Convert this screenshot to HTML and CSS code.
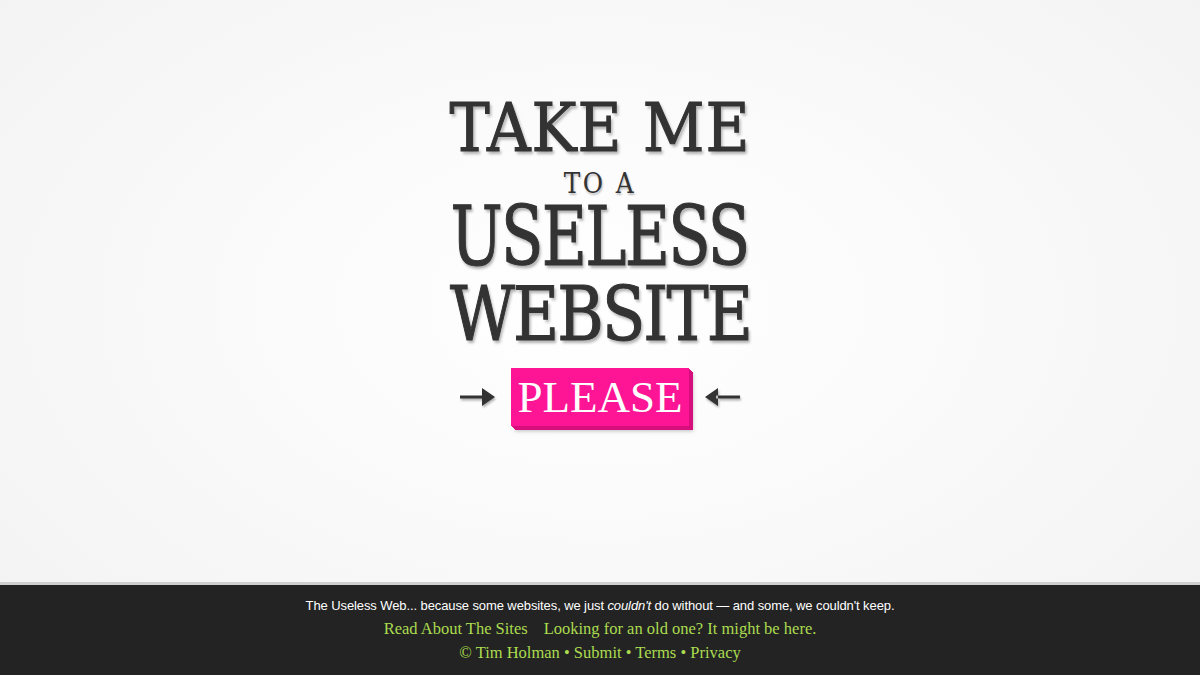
FILE: index.html
```html
<!DOCTYPE html>
<html>
<head>
<meta charset="utf-8">
<link rel="stylesheet" href="styles.css">
</head>
<body>
<main class="stage">
  <div class="headline">
    <div class="line l1"><span>TAKE ME</span></div>
    <div class="line l2"><span>TO A</span></div>
    <div class="line l3"><span>USELESS</span></div>
    <div class="line l4"><span>WEBSITE</span></div>
    <div class="please-row">
      <svg class="arrow" width="38" height="24" viewBox="0 0 38 24"><path d="M1 10.5h24v3H1z M23 3 L36 12 L23 21 Z" fill="#333"/></svg>
      <a class="please">PLEASE</a>
      <svg class="arrow" width="38" height="24" viewBox="0 0 38 24"><path d="M13 10.5h24v3H13z M15 3 L2 12 L15 21 Z" fill="#333"/></svg>
    </div>
  </div>
</main>
<footer class="footer">
  <p class="tag">The Useless Web... because some websites, we just <em>couldn't</em> do without — and some, we couldn't keep.</p>
  <p class="links"><a>Read About The Sites</a><a>Looking for an old one? It might be here.</a></p>
  <p class="links">© Tim Holman • Submit • Terms • Privacy</p>
</footer>
</body>
</html>
```
FILE: styles.css
```css
html, body { margin: 0; padding: 0; }
body {
  width: 1200px; height: 675px; overflow: hidden;
  display: flex; flex-direction: column;
  background: radial-gradient(ellipse at 50% 45%, #ffffff 0%, #fbfbfb 35%, #f2f2f2 100%);
  font-family: "DejaVu Serif", serif;
}
.stage {
  flex: 1;
  display: flex; justify-content: center;
}
.headline {
  padding-top: 90px;
  display: flex; flex-direction: column; align-items: center;
  color: #333;
  text-shadow: 2px 3px 3px rgba(0,0,0,0.3);
  font-stretch: condensed;
  -webkit-text-stroke: 1px #333;
}
.line { white-space: nowrap; }
.line span { display: inline-block; }
.l1 { font-size: 67px; line-height: 77px; letter-spacing: 1px; }
.l2 { font-size: 27.5px; line-height: 32px; letter-spacing: 2.5px; -webkit-text-stroke: 0; text-shadow: 1px 2px 2px rgba(0,0,0,0.25); }
.l3 { font-size: 82px; line-height: 76px; letter-spacing: -2px; }
.l3 span { transform: scaleX(0.84); }
.l4 { font-size: 74px; line-height: 78px; letter-spacing: -2px; }
.l4 span { transform: scaleX(0.95); }
.please-row {
  margin-top: 15px;
  display: flex; align-items: center; gap: 14px;
  -webkit-text-stroke: 0;
}
.arrow { filter: drop-shadow(1px 2px 1px rgba(0,0,0,0.3)); }
.please {
  display: block;
  background: #fd1595;
  color: #fff;
  font-family: "Liberation Serif", serif;
  font-stretch: normal;
  font-size: 45px; line-height: 58px;
  padding: 0 6px;
  text-shadow: none;
  box-shadow: 1px 1px 0 #d60f7c, 2px 2px 0 #d60f7c, 3px 3px 0 #d60f7c, 4px 4px 0 #d60f7c, 4px 5px 4px rgba(0,0,0,0.25);
}
.footer {
  height: 93px;
  background: #232323;
  border-top: 3px solid #cfcfcf;
  text-align: center;
  padding-top: 10px;
  box-sizing: border-box;
}
.footer p { margin: 0; }
.tag {
  color: #fff;
  font-family: "Liberation Sans", Arial, sans-serif;
  font-size: 13px; line-height: 22px;
  letter-spacing: -0.1px;
}
.links {
  color: #abdc4f;
  font-family: "Liberation Serif", serif;
  font-size: 16.5px; line-height: 24px;
}
.links a + a { margin-left: 16px; }
```
